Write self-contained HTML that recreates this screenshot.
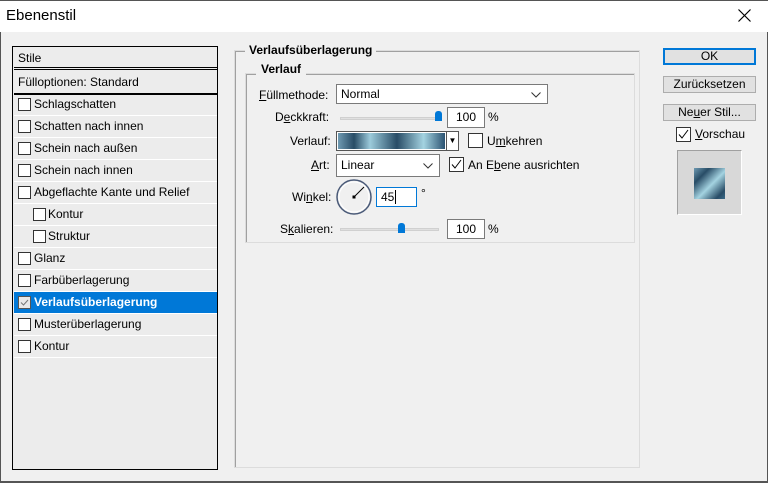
<!DOCTYPE html><html><head><style>
*{margin:0;padding:0;box-sizing:border-box}
body{width:768px;height:483px;background:#f0f0f0;font:12px "Liberation Sans",sans-serif;color:#000;position:relative;overflow:hidden}
.a{position:absolute;white-space:nowrap}
.cb{position:absolute;width:13px;height:13px;border:1px solid #333;background:#fff}
.row{position:absolute;left:1px;width:203px;height:22px;border-bottom:1px solid #fff;line-height:21px}
.row .cb{top:4px}
.btn{position:absolute;left:663px;width:93px;height:17px;border:1px solid #adadad;background:#e1e1e1;text-align:center;line-height:15px}
.in{position:absolute;background:#fff;border:1px solid #7a7a7a;height:20px;line-height:18px;padding-left:4px}
.gb{position:absolute;border:1px solid #dcdcdc;box-shadow:inset 1px 1px 0 #a0a0a0}
u{text-decoration:underline}
.chev{position:absolute;right:6px;top:7px}
</style></head><body>
<div class="a" style="left:0;top:0;width:768px;height:32px;background:#fff;border-top:1px solid #555"></div>
<div class="a" style="left:6px;top:7px;font-size:15px">Ebenenstil</div>
<svg class="a" style="left:738px;top:9px" width="13" height="13"><path d="M0.5 0.5L12.5 12.5M12.5 0.5L0.5 12.5" stroke="#000" stroke-width="1.2"/></svg>
<div class="a" style="left:0;top:32px;width:1px;height:451px;background:#555"></div>
<div class="a" style="left:767px;top:32px;width:1px;height:451px;background:#555"></div>
<div class="a" style="left:0;top:481px;width:768px;height:2px;background:#555"></div>

<div class="a" style="left:12px;top:46px;width:206px;height:424px;border:1px solid #000;background:#ececec">
<div class="row" style="top:0;height:23px;border-bottom:3px double #000;padding-left:4px;line-height:22px">Stile</div>
<div class="row" style="top:25px;height:23px;border-bottom:2px solid #000;padding-left:4px">Fülloptionen: Standard</div>
<div class="row" style="top:47px"><span class="cb" style="left:4px"></span><span style="margin-left:20px">Schlagschatten</span></div>
<div class="row" style="top:69px"><span class="cb" style="left:4px"></span><span style="margin-left:20px">Schatten nach innen</span></div>
<div class="row" style="top:91px"><span class="cb" style="left:4px"></span><span style="margin-left:20px">Schein nach außen</span></div>
<div class="row" style="top:113px"><span class="cb" style="left:4px"></span><span style="margin-left:20px">Schein nach innen</span></div>
<div class="row" style="top:135px"><span class="cb" style="left:4px"></span><span style="margin-left:20px">Abgeflachte Kante und Relief</span></div>
<div class="row" style="top:157px"><span class="cb" style="left:19px"></span><span style="margin-left:34px">Kontur</span></div>
<div class="row" style="top:179px"><span class="cb" style="left:19px"></span><span style="margin-left:34px">Struktur</span></div>
<div class="row" style="top:201px"><span class="cb" style="left:4px"></span><span style="margin-left:20px">Glanz</span></div>
<div class="row" style="top:223px"><span class="cb" style="left:4px"></span><span style="margin-left:20px">Farbüberlagerung</span></div>
<div class="row" style="top:245px;background:#0078d7;color:#fff;font-weight:bold"><span class="cb" style="left:4px;background:#e8e8e8;border-color:#555"><svg width="11" height="11" style="position:absolute;left:0;top:0"><path d="M2 5.5L4.5 8L9 3" stroke="#777" fill="none"/></svg></span><span style="margin-left:20px">Verlaufsüberlagerung</span></div>
<div class="row" style="top:267px"><span class="cb" style="left:4px"></span><span style="margin-left:20px">Musterüberlagerung</span></div>
<div class="row" style="top:289px"><span class="cb" style="left:4px"></span><span style="margin-left:20px">Kontur</span></div>
</div>

<div class="gb" style="left:234px;top:50px;width:406px;height:418px"></div>
<div class="a" style="left:245px;top:43px;background:#f0f0f0;padding:0 4px;font-weight:bold">Verlaufsüberlagerung</div>
<div class="gb" style="left:245px;top:73px;width:390px;height:170px"></div>
<div class="a" style="left:256px;top:62px;background:#f0f0f0;padding:0 5px;font-weight:bold">Verlauf</div>

<div class="a" style="left:259px;top:88px"><u>F</u>üllmethode:</div>
<div class="in" style="left:336px;top:84px;width:212px">Normal<svg class="chev" width="10" height="6"><path d="M0.5 0.5L5 5L9.5 0.5" stroke="#333" fill="none"/></svg></div>
<div class="a" style="left:275px;top:110px">D<u>e</u>ckkraft:</div>
<div class="a" style="left:340px;top:117px;width:100px;height:3px;background:#e0e0e0;border:1px solid #d0d0d0"></div>
<div class="a" style="left:435px;top:111px;width:7px;height:10px;background:#0078d7;border-radius:3px 3px 0 0"></div>
<div class="in" style="left:447px;top:107px;width:38px;height:21px;text-align:center;padding:0">100</div>
<div class="a" style="left:488px;top:110px">%</div>
<div class="a" style="left:290px;top:134px">Verlauf:</div>
<div class="a" style="left:336px;top:131px;width:123px;height:20px;border:1px solid #555;background:#fff;padding:1px">
<div style="width:107px;height:16px;background:linear-gradient(90deg,#6f9ab2,#284c66 15%,#9ccbdb 30%,#284c66 55%,#a4d3e1 80%,#2b5372)"></div>
<div style="position:absolute;right:0;top:0;width:12px;height:18px;border-left:1px solid #555;font-size:8px;text-align:center;line-height:18px">▼</div></div>
<span class="cb" style="left:468px;top:133px;width:15px;height:15px"></span>
<div class="a" style="left:487px;top:134px">U<u>m</u>kehren</div>
<div class="a" style="left:311px;top:158px"><u>A</u>rt:</div>
<div class="in" style="left:336px;top:154px;width:104px;height:23px;line-height:21px">Linear<svg class="chev" width="10" height="6" style="top:8px"><path d="M0.5 0.5L5 5L9.5 0.5" stroke="#333" fill="none"/></svg></div>
<span class="cb" style="left:449px;top:157px;width:15px;height:15px"><svg width="13" height="13" style="position:absolute;left:0;top:0"><path d="M2 6.5L5 10L11 2" stroke="#000" fill="none"/></svg></span>
<div class="a" style="left:468px;top:158px">An E<u>b</u>ene ausrichten</div>
<div class="a" style="left:292px;top:190px">Wi<u>n</u>kel:</div>
<svg class="a" style="left:335px;top:178px" width="38" height="38"><circle cx="19" cy="19" r="17" fill="#f0f0f0" stroke="#4a5a78" stroke-width="1.5"/><circle cx="19" cy="19" r="15" fill="none" stroke="#fff"/><line x1="19" y1="19" x2="29" y2="9" stroke="#000"/><rect x="17.5" y="17.5" width="3" height="3"/></svg>
<div class="in" style="left:376px;top:187px;width:41px;height:20px;border-color:#0078d7">45<span style="border-left:1px solid #000;margin-left:1px"></span></div>
<div class="a" style="left:421px;top:186px">°</div>
<div class="a" style="left:280px;top:222px">S<u>k</u>alieren:</div>
<div class="a" style="left:340px;top:228px;width:99px;height:3px;background:#e0e0e0;border:1px solid #d0d0d0"></div>
<div class="a" style="left:398px;top:223px;width:7px;height:10px;background:#0078d7;border-radius:3px 3px 0 0"></div>
<div class="in" style="left:447px;top:219px;width:38px;height:20px;text-align:center;padding:0">100</div>
<div class="a" style="left:488px;top:222px">%</div>

<div class="btn" style="top:48px;border:2px solid #0078d7;line-height:13px">OK</div>
<div class="btn" style="top:76px">Zurücksetzen</div>
<div class="btn" style="top:104px">Ne<u>u</u>er Stil...</div>
<span class="cb" style="left:676px;top:127px;width:15px;height:15px"><svg width="13" height="13" style="position:absolute;left:0;top:0"><path d="M2 6.5L5 10L11 2" stroke="#000" fill="none"/></svg></span>
<div class="a" style="left:695px;top:127px"><u>V</u>orschau</div>
<div class="a" style="left:677px;top:150px;width:65px;height:65px;background:#d8d8d8;border:1px solid #a0a0a0;border-right-color:#fff;border-bottom-color:#fff"></div>
<div class="a" style="left:694px;top:168px;width:31px;height:31px;background:linear-gradient(135deg,#6f9ab2,#284c66 25%,#a4d3e1 55%,#284c66 85%,#3a6a88)"></div>
</body></html>
